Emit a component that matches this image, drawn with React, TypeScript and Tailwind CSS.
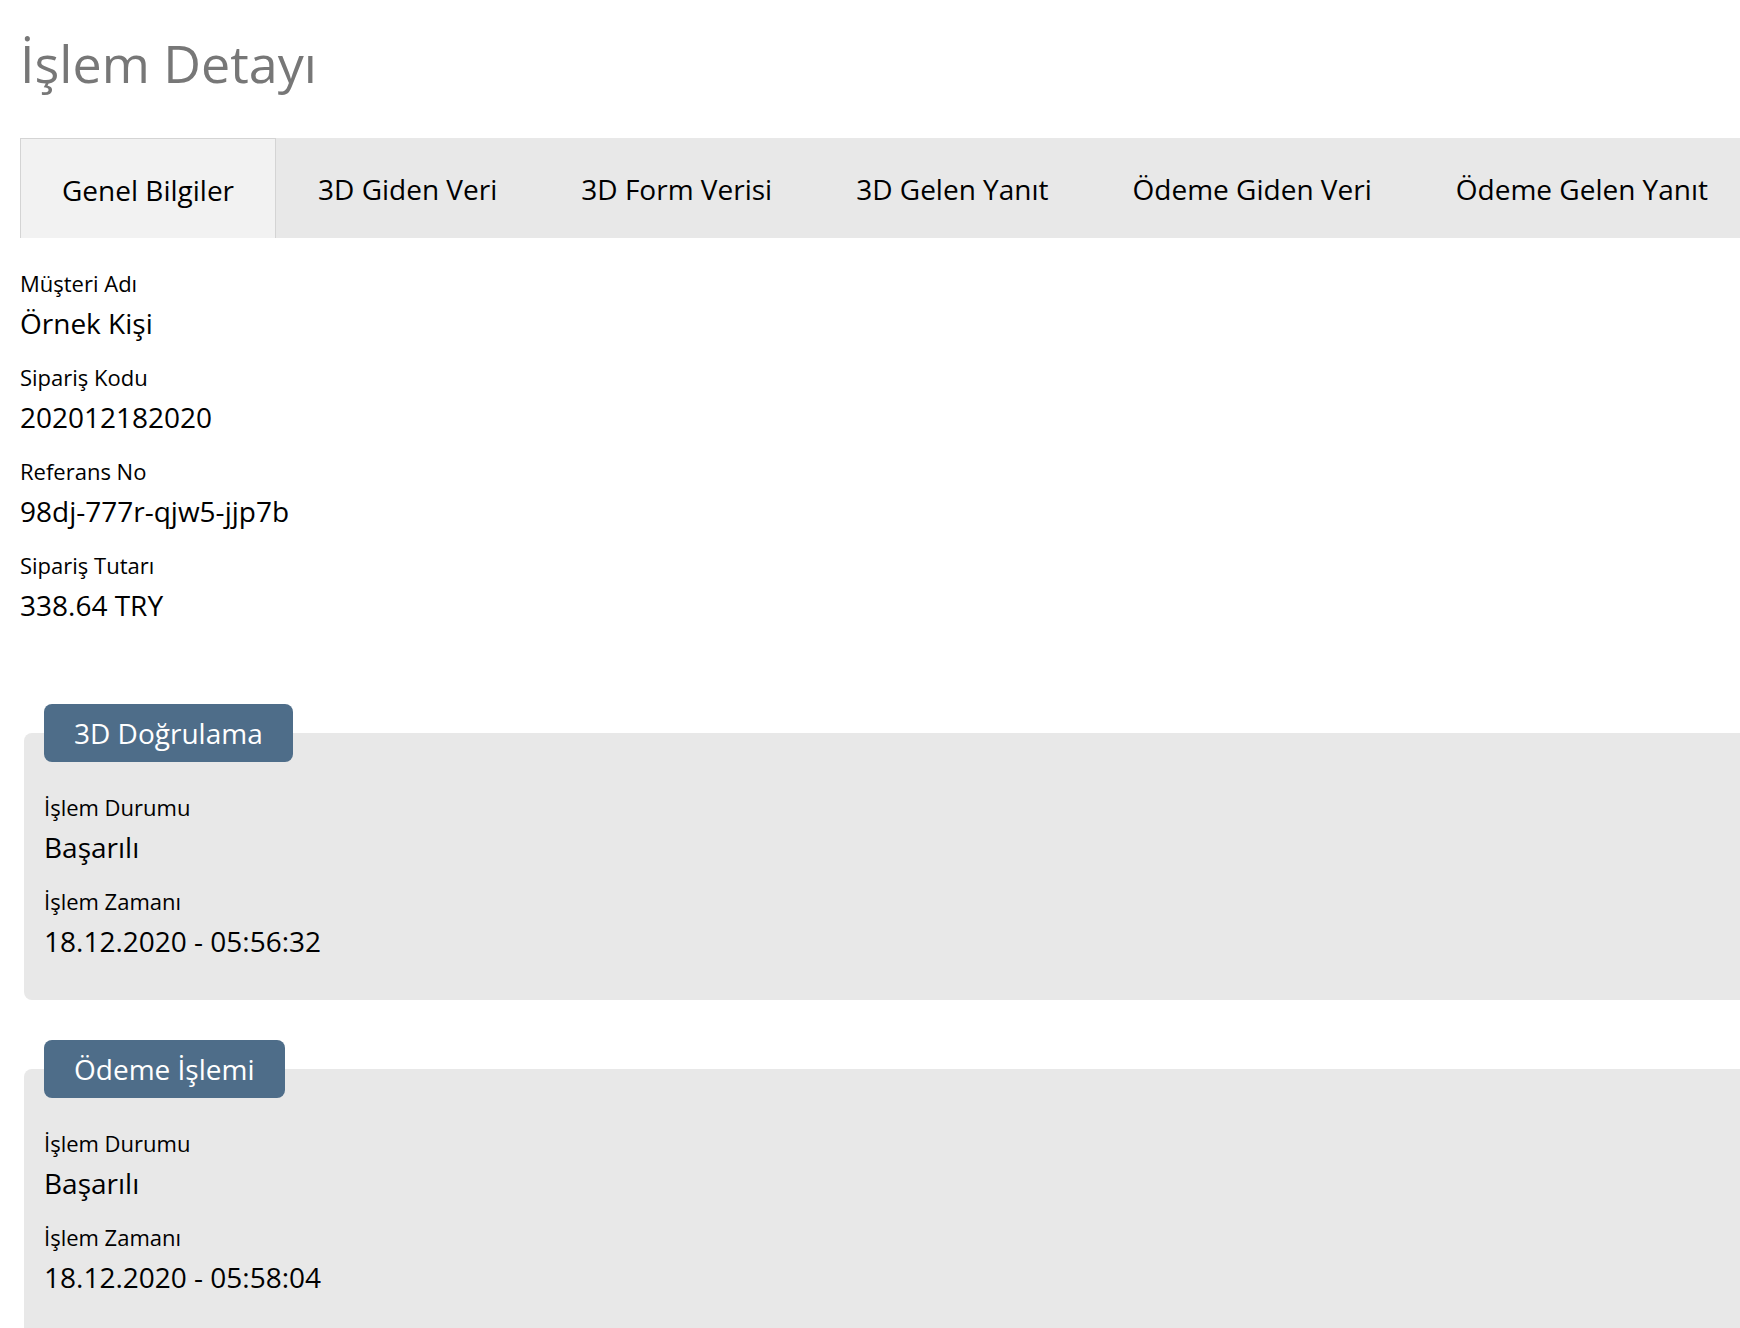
const tabs = [
  "Genel Bilgiler",
  "3D Giden Veri",
  "3D Form Verisi",
  "3D Gelen Yanıt",
  "Ödeme Giden Veri",
  "Ödeme Gelen Yanıt",
];

const general = [
  { label: "Müşteri Adı", value: "Örnek Kişi" },
  { label: "Sipariş Kodu", value: "202012182020" },
  { label: "Referans No", value: "98dj-777r-qjw5-jjp7b" },
  { label: "Sipariş Tutarı", value: "338.64 TRY" },
];

const sections = [
  {
    title: "3D Doğrulama",
    fields: [
      { label: "İşlem Durumu", value: "Başarılı" },
      { label: "İşlem Zamanı", value: "18.12.2020 - 05:56:32" },
    ],
  },
  {
    title: "Ödeme İşlemi",
    fields: [
      { label: "İşlem Durumu", value: "Başarılı" },
      { label: "İşlem Zamanı", value: "18.12.2020 - 05:58:04" },
    ],
  },
];

function Field({ label, value }: { label: string; value: string }) {
  return (
    <div className="flex flex-col pb-[18px]">
      <div className="h-[32px] text-[22px] leading-[32px] text-black">{label}</div>
      <div className="mt-[4px] h-[40px] text-[28px] leading-[40px] text-black">{value}</div>
    </div>
  );
}

export default function App() {
  return (
    <div
      className="min-h-screen overflow-hidden bg-white pl-[20px]"
      style={{ fontFamily: '"Open Sans", "Noto Sans", sans-serif' }}
    >
      <h1 className="pt-[28px] text-[52px] leading-[70px] text-[#777777]">İşlem Detayı</h1>

      <div className="mt-[40px] flex h-[100px] w-[1780px] bg-[#e8e8e8]">
        {tabs.map((tab, i) => (
          <div
            key={tab}
            className={
              i === 0
                ? "flex items-center whitespace-nowrap border-x border-t border-[#d4d4d4] bg-[#f2f2f2] px-[41px] pt-[2px] text-[28px] text-black"
                : "flex items-center whitespace-nowrap px-[42px] pt-[2px] text-[28px] text-black"
            }
          >
            {tab}
          </div>
        ))}
      </div>

      <div className="mt-[29px] flex flex-col">
        {general.map(f => (
          <Field key={f.label} label={f.label} value={f.value} />
        ))}
      </div>

      <div className="mt-[61px] flex flex-col gap-[40px] pl-[4px]">
        {sections.map(s => (
          <div key={s.title} className="flex flex-col">
            <div className="relative z-10 ml-[20px] self-start rounded-[8px] bg-[#4e6d89] px-[30px] text-[28px] leading-[58px] text-white">
              {s.title}
            </div>
            <div className="-mt-[29px] rounded-l-[8px] bg-[#e8e8e8] pb-[21px] pl-[20px] pt-[58px]">
              {s.fields.map(f => (
                <Field key={f.label} label={f.label} value={f.value} />
              ))}
            </div>
          </div>
        ))}
      </div>
    </div>
  );
}
